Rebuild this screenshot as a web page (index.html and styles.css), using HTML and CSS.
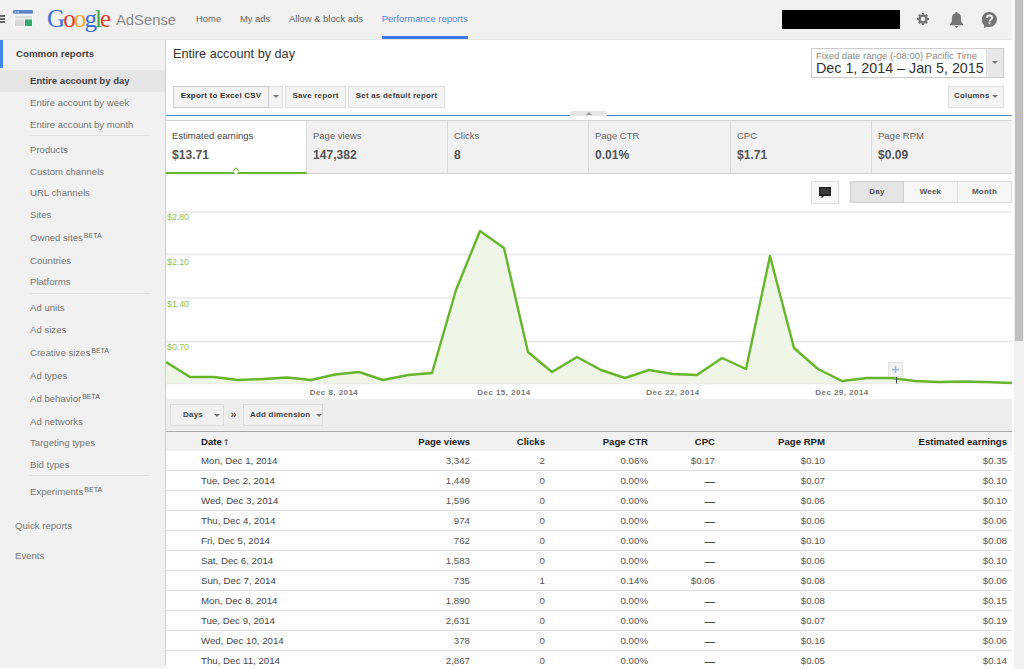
FILE: index.html
```html
<!DOCTYPE html>
<html lang="en">
<head>
<meta charset="utf-8">
<title>Google AdSense - Performance reports</title>
<link rel="stylesheet" href="styles.css">
</head>
<body>
<div class="page">
  <div class="app">
    <header class="topbar">
      <div class="burger"><i></i><i></i><i></i></div>
      <svg class="appicon" width="20" height="17" viewBox="0 0 20 18" preserveAspectRatio="none">
        <rect width="20" height="18" rx="1" fill="#fafafa"/>
        <rect width="20" height="4" rx="1" fill="#5f86c6"/>
        <rect x="2" y="1.500" width="1.300" height="1.300" fill="#dfe8f5"/>
        <rect x="4.500" y="1.500" width="1.300" height="1.300" fill="#dfe8f5"/>
        <rect x="2" y="6" width="17" height="3" fill="#d9d9d9"/>
        <rect x="2" y="10" width="9.500" height="7" fill="#d9d9d9"/>
        <rect x="12" y="10" width="7" height="7" fill="#35a96d"/>
      </svg>
      <div class="logo"><span class="g-b">G</span><span class="g-r">o</span><span class="g-y">o</span><span class="g-b">g</span><span class="g-g">l</span><span class="g-r">e</span></div>
      <div class="product">AdSense</div>
      <nav class="nav">
        <a>Home</a><a>My ads</a><a>Allow &amp; block ads</a><a class="active">Performance reports</a>
      </nav>
      <div class="redacted"></div>
      <svg class="ico ico-gear" width="12" height="12" viewBox="0 0 24 24"><path fill="#757575" fill-rule="evenodd" d="M10 0h4l.6 3.200 1.900.8 2.700-1.800 2.800 2.800-1.800 2.700.8 1.900L24 10v4l-3.200.6-.8 1.900 1.800 2.700-2.800 2.800-2.700-1.800-1.900.8L14 24h-4l-.6-3.200-1.900-.8-2.700 1.800-2.800-2.800 1.800-2.700-.8-1.900L0 14v-4l3.200-.6.8-1.900-1.800-2.700 2.800-2.800 2.700 1.800 1.900-.8zM12 7.500a4.500 4.500 0 1 0 0 9 4.500 4.500 0 0 0 0-9z"/></svg>
      <svg class="ico ico-bell" width="13" height="16" viewBox="0 0 14 17" preserveAspectRatio="none"><path fill="#757575" d="M7 0c.8 0 1.300.6 1.300 1.400C10.700 2 12 4 12 6.500V10l2 3v1H0v-1l2-3V6.500C2 4 3.300 2 5.700 1.400 5.700.6 6.200 0 7 0zM5.500 15h3C8.400 16.200 7.800 17 7 17s-1.400-.8-1.500-2z"/></svg>
      <svg class="ico ico-help" width="15" height="16" viewBox="0 0 16 17" preserveAspectRatio="none"><path fill="#757575" d="M8 0a8 8 0 0 1 0 16H4.500L2 17l.3-3.100A8 8 0 0 1 8 0z"/><path fill="none" stroke="#f1f1f1" stroke-width="2" d="M5.200 6.200C5.300 4.500 6.500 3.700 8 3.700s2.800.9 2.800 2.300c0 2-2.800 2-2.800 4.200"/><rect x="7" y="11" width="2" height="2" fill="#f1f1f1"/></svg>
    </header>
    <div class="body">
      <aside class="sidewrap">
        <div class="sidebar">
          <div class="side-head">Common reports</div>
          <ul class="side-list">
            <li class="current">Entire account by day</li>
            <li>Entire account by week</li>
            <li>Entire account by month</li>
            <li class="sep"></li>
            <li>Products</li>
            <li>Custom channels</li>
            <li>URL channels</li>
            <li>Sites</li>
            <li class="beta">Owned sites<sup>BETA</sup></li>
            <li>Countries</li>
            <li>Platforms</li>
            <li class="sep"></li>
            <li>Ad units</li>
            <li>Ad sizes</li>
            <li class="beta">Creative sizes<sup>BETA</sup></li>
            <li>Ad types</li>
            <li class="beta">Ad behavior<sup>BETA</sup></li>
            <li>Ad networks</li>
            <li>Targeting types</li>
            <li>Bid types</li>
            <li class="sep"></li>
            <li class="beta">Experiments<sup>BETA</sup></li>
          </ul>
          <div class="side-link first">Quick reports</div>
          <div class="side-link">Events</div>
        </div>
      </aside>
      <main class="main">
        <section class="top">
          <div class="row1">
            <h1 class="title">Entire account by day</h1>
            <div class="datebox">
              <div class="date-text">
                <div class="date-small">Fixed date range (-08:00) Pacific Time</div>
                <div class="date-big">Dec 1, 2014 – Jan 5, 2015</div>
              </div>
              <div class="date-arrow"><b class="caret"></b></div>
            </div>
          </div>
          <div class="toolbar">
            <button class="btn btn-export">Export to Excel CSV</button>
            <button class="btn btn-drop"><b class="caret"></b></button>
            <button class="btn btn-save">Save report</button>
            <button class="btn btn-default">Set as default report</button>
            <button class="btn btn-columns">Columns <b class="caret"></b></button>
          </div>
          <div class="collapse"><b class="caret up"></b></div>
        </section>
        <section class="tabs">
          <div class="tab selected"><div class="tab-label">Estimated earnings</div><div class="tab-value">$13.71</div><i class="notch"></i></div>
          <div class="tab"><div class="tab-label">Page views</div><div class="tab-value">147,382</div></div>
          <div class="tab"><div class="tab-label">Clicks</div><div class="tab-value">8</div></div>
          <div class="tab"><div class="tab-label">Page CTR</div><div class="tab-value">0.01%</div></div>
          <div class="tab"><div class="tab-label">CPC</div><div class="tab-value">$1.71</div></div>
          <div class="tab"><div class="tab-label">Page RPM</div><div class="tab-value">$0.09</div></div>
        </section>
        <section class="chart-controls">
          <button class="btn btn-chat">
            <svg width="12" height="12" viewBox="0 0 12 12"><path fill="#222" d="M0 0h12v9H5L2.500 11.500V9H0z"/><rect x="1.500" y="1.500" width="9" height="5.500" fill="#3a3a3a"/></svg>
          </button>
          <div class="seg">
            <button class="seg-btn on">Day</button><button class="seg-btn">Week</button><button class="seg-btn">Month</button>
          </div>
        </section>
        <svg class="chart" width="846" height="194" viewBox="166 205 846 194">
          <g class="grid">
            <line x1="166" x2="1012" y1="212" y2="212"/>
            <line x1="166" x2="1012" y1="254.500" y2="254.500"/>
            <line x1="166" x2="1012" y1="298" y2="298"/>
            <line x1="166" x2="1012" y1="341.500" y2="341.500"/>
            <line x1="166" x2="1012" y1="383.500" y2="383.500"/>
          </g>
          <path class="area" d="M166 362L190 377L214 377L238 380L263 379L287 377.500L311 380L335 374.500L359 372L383 380L408 375L432 373L456 290L480 231L504 248L528 352L552 372L577 357L601 370L625 378L649 370L673 374L697 375L722 358L746 369L770 256L794 348L818 369L842 381L867 378L891 378L915 381L939 382L963 381.500L987 382L1012 383L1012 383.500L166 383.500Z"/>
          <path class="line" d="M166 362L190 377L214 377L238 380L263 379L287 377.500L311 380L335 374.500L359 372L383 380L408 375L432 373L456 290L480 231L504 248L528 352L552 372L577 357L601 370L625 378L649 370L673 374L697 375L722 358L746 369L770 256L794 348L818 369L842 381L867 378L891 378L915 381L939 382L963 381.500L987 382L1012 383"/>
          <g class="ylabel">
            <text x="167" y="220">$2.80</text>
            <text x="167" y="264.500">$2.10</text>
            <text x="167" y="307">$1.40</text>
            <text x="167" y="350">$0.70</text>
          </g>
          <g class="xlabel">
            <text x="334" y="395">Dec 8, 2014</text>
            <text x="504" y="395">Dec 15, 2014</text>
            <text x="673" y="395">Dec 22, 2014</text>
            <text x="842" y="395">Dec 29, 2014</text>
          </g>
          <rect class="flag" x="888.500" y="362.500" width="14" height="14"/>
          <path class="flag-plus" d="M892 369.500h7M895.500 366v7"/>
          <line class="flag-pole" x1="896.500" x2="896.500" y1="377" y2="383.500"/>
        </svg>
        <section class="dims">
          <button class="btn btn-days">Days <b class="caret"></b></button>
          <span class="raquo">»</span>
          <button class="btn btn-add">Add dimension <b class="caret"></b></button>
        </section>
        <table class="report">
          <colgroup>
            <col class="c-date"><col class="c-views"><col class="c-clicks"><col class="c-ctr"><col class="c-cpc"><col class="c-rpm"><col class="c-earn">
          </colgroup>
          <thead>
            <tr><th class="date">Date<span class="sort">↑</span></th><th>Page views</th><th>Clicks</th><th>Page CTR</th><th>CPC</th><th>Page RPM</th><th>Estimated earnings</th></tr>
          </thead>
          <tbody>
            <tr><td class="date">Mon, Dec 1, 2014</td><td>3,342</td><td>2</td><td>0.06%</td><td>$0.17</td><td>$0.10</td><td>$0.35</td></tr>
            <tr><td class="date">Tue, Dec 2, 2014</td><td>1,449</td><td>0</td><td>0.00%</td><td class="dash">—</td><td>$0.07</td><td>$0.10</td></tr>
            <tr><td class="date">Wed, Dec 3, 2014</td><td>1,596</td><td>0</td><td>0.00%</td><td class="dash">—</td><td>$0.06</td><td>$0.10</td></tr>
            <tr><td class="date">Thu, Dec 4, 2014</td><td>974</td><td>0</td><td>0.00%</td><td class="dash">—</td><td>$0.06</td><td>$0.06</td></tr>
            <tr><td class="date">Fri, Dec 5, 2014</td><td>762</td><td>0</td><td>0.00%</td><td class="dash">—</td><td>$0.10</td><td>$0.08</td></tr>
            <tr><td class="date">Sat, Dec 6, 2014</td><td>1,583</td><td>0</td><td>0.00%</td><td class="dash">—</td><td>$0.06</td><td>$0.10</td></tr>
            <tr><td class="date">Sun, Dec 7, 2014</td><td>735</td><td>1</td><td>0.14%</td><td>$0.06</td><td>$0.08</td><td>$0.06</td></tr>
            <tr><td class="date">Mon, Dec 8, 2014</td><td>1,890</td><td>0</td><td>0.00%</td><td class="dash">—</td><td>$0.08</td><td>$0.15</td></tr>
            <tr><td class="date">Tue, Dec 9, 2014</td><td>2,631</td><td>0</td><td>0.00%</td><td class="dash">—</td><td>$0.07</td><td>$0.19</td></tr>
            <tr><td class="date">Wed, Dec 10, 2014</td><td>378</td><td>0</td><td>0.00%</td><td class="dash">—</td><td>$0.16</td><td>$0.06</td></tr>
            <tr><td class="date">Thu, Dec 11, 2014</td><td>2,867</td><td>0</td><td>0.00%</td><td class="dash">—</td><td>$0.05</td><td>$0.14</td></tr>
          </tbody>
        </table>
      </main>
    </div>
  </div>
  <div class="scrollbar"><div class="thumb"></div></div>
</div>
</body>
</html>
```

FILE: styles.css
```css
* { box-sizing: border-box; }
html, body { margin: 0; padding: 0; height: 669px; overflow: hidden; background: #fff; }
body { font-family: "Liberation Sans", Arial, sans-serif; font-size: 9.6px; color: #333; }
ul { list-style: none; margin: 0; padding: 0; }
button { font-family: inherit; margin: 0; }

.page { display: flex; height: 669px; overflow: hidden; }
.app { width: 1012px; flex: none; display: flex; flex-direction: column; }
.scrollbar { width: 12px; flex: none; padding-left: 2.500px; background: linear-gradient(90deg, #fff 2.500px, #f1f1f1 2.500px); padding-right: 1px; }
.thumb { height: 341px; background: #c0c0c0; }

/* top bar */
.topbar { height: 40px; flex: none; background: #f1f1f1; border-bottom: 1px solid #e5e5e5; display: flex; align-items: center; }
.burger { width: 5px; margin-top: -1px; display: flex; flex-direction: column; gap: 1.300px; }
.burger i { display: block; height: 1.500px; background: #666; }
.appicon { margin-left: 8px; margin-top: -2px; }
.logo { margin-left: 14px; width: 64px; font-family: "Liberation Serif", serif; font-size: 25px; line-height: 28px; letter-spacing: -1.900px; margin-top: -1px; white-space: nowrap; }
.g-b { color: #3b6fd8; }
.g-r { color: #d8402f; }
.g-y { color: #e9a826; }
.g-g { color: #3fa548; }
.product { margin-left: 5px; width: 60px; font-size: 14.800px; color: #8a8a8a; white-space: nowrap; }
.nav { display: flex; margin-left: 20px; gap: 18.700px; height: 39px; }
.nav a { display: block; line-height: 38px; color: #666; font-size: 9.450px; white-space: nowrap; }
.nav a.active { color: #5585de; height: 39px; border-bottom: 3px solid #3b78e7; }
.redacted { width: 118px; height: 19px; background: #000; margin-left: 314px; margin-top: -1px; }
.ico { flex: none; }
.ico-gear { margin-left: 17px; margin-top: -1px; }
.ico-bell { margin-left: 21px; margin-top: 0; }
.ico-help { margin-left: 19px; margin-top: 0; }

/* sidebar */
.body { flex: 1; display: flex; min-height: 0; }
.sidewrap { width: 166px; flex: none; background: #f1f1f1; height: 628px; }
.sidebar { height: 625px; border-right: 1px solid #cfcfcf; }
.side-head { height: 28px; line-height: 27px; border-left: 3px solid #4285f4; padding-left: 13px; font-weight: bold; font-size: 9.700px; color: #444; margin-bottom: 2px; }
.side-list li { height: 21.500px; line-height: 21.500px; padding-left: 30px; color: #777; font-size: 9.600px; white-space: nowrap; }
.side-list li.current { height: 22px; line-height: 22px; background: #e5e5e5; font-weight: bold; color: #444; }
.side-list li.beta { height: 24.500px; line-height: 26.500px; }
.side-list li.sep { height: 1px; margin: 0 15px 3.250px 30px; padding: 0; background: #e0e0e0; }
.side-list sup { font-size: 7px; line-height: 0; vertical-align: 3.500px; color: #666; margin-left: 1px; }
.side-link { color: #777; padding-left: 15px; font-size: 9.600px; height: 20px; line-height: 20px; margin-top: 10px; }
.side-link.first { margin-top: 12px; }

/* main column */
.main { width: 846px; flex: none; display: flex; flex-direction: column; }
.top { position: relative; height: 76px; padding: 7px 8px 0 7px; border-bottom: 1px solid #5b88c9; flex: none; }
.row1 { display: flex; justify-content: space-between; height: 39px; }
.title { margin: 0; font-size: 12.700px; font-weight: normal; line-height: 14px; color: #333; }
.datebox { width: 193px; height: 30px; margin-top: 1px; border: 1px solid #ccc; display: flex; }
.date-text { flex: 1; padding: 1px 0 0 4px; white-space: nowrap; }
.date-small { font-size: 9.500px; line-height: 11px; color: #888; }
.date-big { font-size: 14.300px; line-height: 15px; color: #333; }
.date-arrow { width: 17px; background: #e8e8e8; border-left: 1px solid #ddd; display: flex; align-items: center; justify-content: center; padding-bottom: 1px; }
.caret { display: inline-block; width: 0; height: 0; border-left: 3px solid transparent; border-right: 3px solid transparent; border-top: 3px solid #777; vertical-align: middle; }
.caret.up { border-top: 0; border-bottom: 3px solid #999; }

.toolbar { display: flex; height: 22px; }
.btn { height: 22px; padding: 0 0 3px; background: #f4f4f4; border: 1px solid #dcdcdc; font-size: 8px; font-weight: bold; color: #444; letter-spacing: .2px; white-space: nowrap; }
.btn .caret { margin-top: 2px; }
.btn-export { width: 96px; color: #333; border-color: #ccc; }
.btn-drop { width: 14px; border-left: 0; margin-right: 2px; }
.btn-save { width: 61px; margin-right: 2px; }
.btn-default { width: 97px; }
.btn-columns { width: 56px; margin-left: auto; }
.collapse { position: absolute; left: 404px; top: 71px; width: 37px; height: 5px; background: #e4e4e4; border-radius: 2px 2px 0 0; display: flex; align-items: center; justify-content: center; }

/* tabs */
.tabs { margin-top: 4px; height: 54px; flex: none; display: grid; grid-template-columns: 141px 141px 141px 142px 141px 140px; border-top: 1px solid #d2d2d2; }
.tab { position: relative; background: #f1f1f1; border-right: 1px solid #d8d8d8; border-bottom: 1px solid #cfcfcf; padding: 8px 0 0 6px; }
.tab:last-child { border-right: 0; }
.tab-label { font-size: 9.500px; line-height: 13px; color: #666; }
.tab-value { margin-top: 6px; font-size: 12.100px; font-weight: bold; line-height: 14px; color: #555; }
.tab.selected { background: #fff; border-bottom: 2px solid #66b52a; padding-top: 8px; }
.tab.selected .tab-label { color: #444; }
.notch { position: absolute; left: 67px; bottom: -2px; width: 6px; height: 6px; background: #fff; border-top: 1.500px solid #66b52a; border-left: 1.500px solid #66b52a; transform: rotate(45deg) scale(.8); }

/* chart */
.chart-controls { height: 31px; flex: none; padding-top: 7px; display: flex; justify-content: flex-end; }
.btn-chat { width: 28px; height: 23px; margin-right: 11px; padding: 0; background: #f8f8f8; display: flex; align-items: center; justify-content: center; }
.seg { display: flex; height: 22px; }
.seg-btn { width: 54px; padding: 0 0 1px; background: #f6f6f6; border: 1px solid #dcdcdc; border-left-width: 0; font-size: 8px; font-weight: bold; letter-spacing: .2px; color: #555; }
.seg-btn:first-child { border-left-width: 1px; }
.seg-btn.on { background: #e4e4e4; border-color: #d0d0d0; color: #555; }
.chart { display: block; flex: none; }
.grid line { stroke: #e8e8e8; stroke-width: 1.300; }
.area { fill: #eef6e8; }
.line { fill: none; stroke: #66b52a; stroke-width: 2.400; stroke-linejoin: round; }
.ylabel text { font-size: 8.800px; fill: #8cc152; }
.xlabel text { font-size: 8px; font-weight: bold; fill: #777; text-anchor: middle; letter-spacing: .45px; }
.flag { fill: #f3f3f3; stroke: #e2e2e2; }
.flag-plus { stroke: #9db9e4; stroke-width: 1.500; fill: none; }
.flag-pole { stroke: #444; stroke-width: 1; }

/* dimensions */
.dims { height: 32px; flex: none; background: #eee; padding: 5px 0 0 4px; display: flex; }
.btn-days { width: 54px; height: 22px; padding: 0 0 1px 12px; background: #f1f1f1; text-align: left; }
.btn-days .caret { margin-left: 9px; }
.raquo { width: 19px; text-align: center; font-size: 11px; line-height: 21px; font-weight: bold; color: #555; }
.btn-add { width: 80px; height: 22px; padding: 0 0 1px 6px; background: #f1f1f1; text-align: left; }
.btn-add .caret { margin-left: 3px; }

/* table */
.report { width: 846px; table-layout: fixed; border-collapse: separate; border-spacing: 0; flex: none; }
.c-date { width: 194px; }
.c-views { width: 115px; }
.c-clicks { width: 75px; }
.c-ctr { width: 103px; }
.c-cpc { width: 67px; }
.c-rpm { width: 110px; }
.c-earn { width: 182px; }
th { height: 20px; padding: 1px 5px 0 0; background: #f1f1f1; border-top: 1px solid #aaa; font-size: 9.600px; font-weight: bold; color: #222; text-align: right; line-height: 18px; white-space: nowrap; }
td { height: 20px; padding: 0 5px 0 0; background: #fff; border-bottom: 1px solid #ddd; font-size: 9.700px; line-height: 18px; color: #555; text-align: right; white-space: nowrap; }
th.date, td.date { text-align: left; padding-left: 35px; }
td.date { color: #444; }
td.dash { color: #222; font-size: 10.500px; line-height: 16px; }
.sort { font-family: "DejaVu Sans", sans-serif; font-size: 8px; line-height: 0; color: #555; margin-left: 1px; }
```
